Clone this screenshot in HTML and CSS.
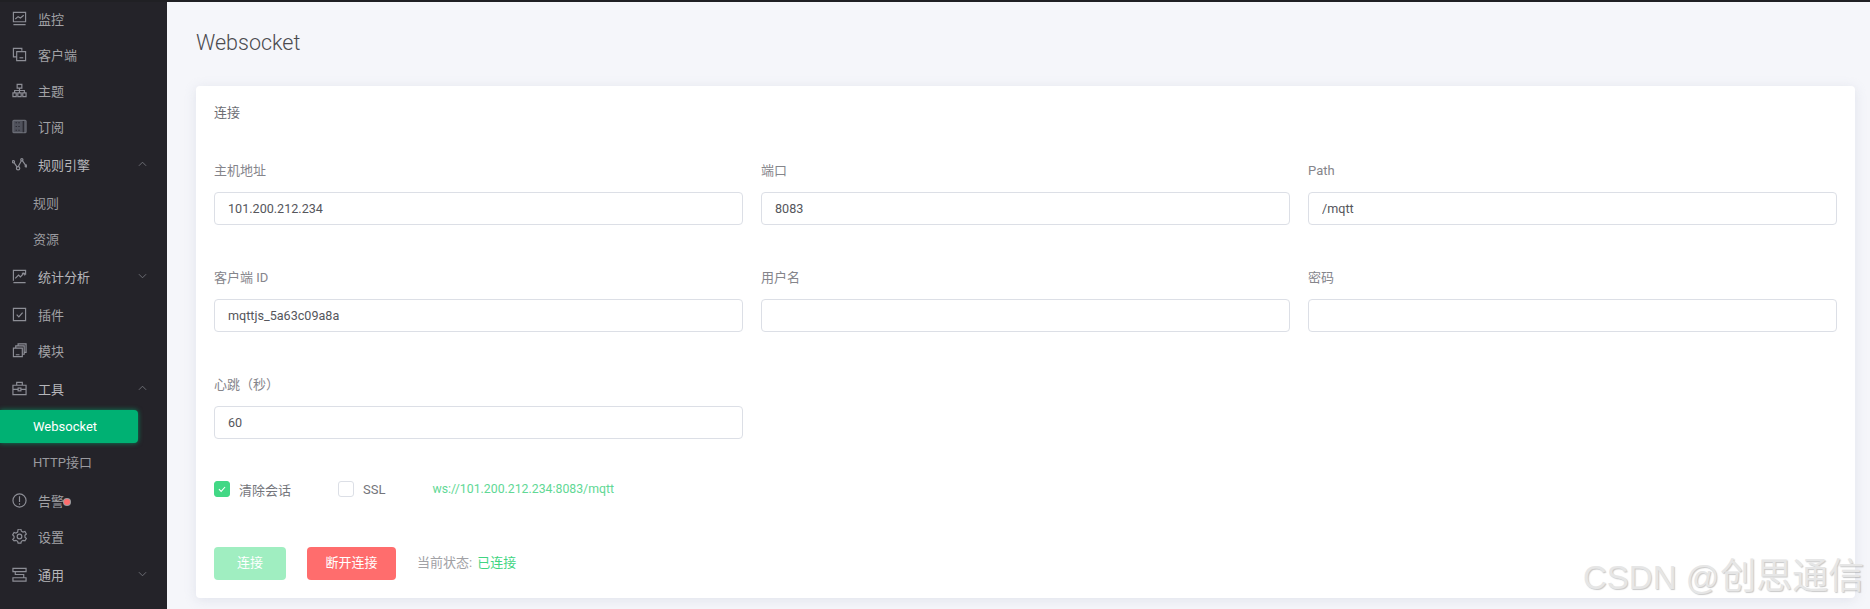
FILE: index.html
```html
<!DOCTYPE html>
<html lang="zh-CN">
<head>
<meta charset="utf-8">
<title>Websocket</title>
<link rel="stylesheet" href="styles.css">
</head>
<body>
<div class="topbar"></div>
<div class="app">
  <aside class="sidebar">
    <nav class="menu">
      <a class="item"><svg class="ic" viewBox="0 0 16 16"><path d="M1.500 1.500h13v10h-13zM1.500 14.500h13"/><path d="M3.500 8.500l3-2.500 2.500 1.500 3.500-3"/></svg><span>监控</span></a>
      <a class="item"><svg class="ic" viewBox="0 0 16 16"><path d="M10.500 4V1.500h-9v9H5M5 5h9.500v9.500H5z"/><path d="M8 11.500h4"/></svg><span>客户端</span></a>
      <a class="item"><svg class="ic" viewBox="0 0 16 16"><path d="M5.500 1.500h5v4h-5zM1 10.500h3.500v4H1zM6.200 10.500h3.600v4H6.200zM11.500 10.500H15v4h-3.500zM2.800 10.500V8h10.400v2.500M8 5.500v5"/></svg><span>主题</span></a>
      <a class="item"><svg class="ic" viewBox="0 0 16 16"><rect class="fill" x="1" y="1.500" width="14" height="13" rx="1"/><path class="cut" d="M4.500 3.500v1M4.500 7.500v1M4.500 11.500v1M7.500 3.500v1M7.500 7.500v1M7.500 11.500v1M12 2v12"/></svg><span>订阅</span></a>
      <a class="item head"><svg class="ic" viewBox="0 0 16 16"><path d="M1.500 5L6 11.500 10.500 3l4.500 6.500"/><circle class="solid" cx="1.500" cy="5" r="1.200"/><circle class="solid" cx="6.500" cy="12" r="1.800"/><circle class="solid" cx="10.500" cy="3" r="1.200"/><circle class="solid" cx="15" cy="9.500" r="1"/></svg><span>规则引擎</span><svg class="chev" viewBox="0 0 10 6"><path d="M1 5l4-4 4 4"/></svg></a>
      <a class="sub">规则</a>
      <a class="sub">资源</a>
      <a class="item head"><svg class="ic" viewBox="0 0 16 16"><path d="M14.500 6V1.500H1.500v11"/><path d="M1.500 14.500h13M3.500 10l3.500-3.500 2 2 4-4.500M10.500 4.500h3v2.500"/></svg><span>统计分析</span><svg class="chev" viewBox="0 0 10 6"><path d="M1 1l4 4 4-4"/></svg></a>
      <a class="item"><svg class="ic" viewBox="0 0 16 16"><path d="M1.500 1.500h13v13h-13z"/><path d="M5 8.200l2.300 2.300L11.300 6"/></svg><span>插件</span></a>
      <a class="item"><svg class="ic" viewBox="0 0 16 16"><path d="M1.500 5.500H11v9H1.500zM4 5V3h9v9h-2M6.500 3V1H15v9h-2M4 12.500h4"/></svg><span>模块</span></a>
      <a class="item head"><svg class="ic" viewBox="0 0 16 16"><path d="M1 4.500h14v10H1zM5 4.500v-3h6v3M1 9h14"/><rect class="solid" x="6.500" y="7.500" width="3" height="3"/></svg><span>工具</span><svg class="chev" viewBox="0 0 10 6"><path d="M1 5l4-4 4 4"/></svg></a>
      <a class="sub active">Websocket</a>
      <a class="sub">HTTP接口</a>
      <a class="item alarm"><svg class="ic" viewBox="0 0 16 16"><circle cx="8" cy="8" r="7"/><path d="M8 3.500v6M8 11v1.500"/></svg><span>告警</span><i class="dot"></i></a>
      <a class="item"><svg class="ic" viewBox="0 0 16 16"><path d="M6.500 1h3l.5 2 1.800 1 2-.6 1.500 2.600-1.500 1.400v2l1.500 1.400-1.500 2.600-2-.6-1.800 1-.5 2h-3l-.5-2-1.800-1-2 .6L.7 11.800l1.500-1.400v-2L.7 7l1.500-2.600 2 .6L6 4z" transform="translate(0 -.700)"/><circle cx="8" cy="8" r="2.500"/></svg><span>设置</span></a>
      <a class="item head"><svg class="ic" viewBox="0 0 16 16"><path d="M1 1.500h14V5H1zM1 11.500h14V15H1zM3.500 5v3h9v3.500"/></svg><span>通用</span><svg class="chev" viewBox="0 0 10 6"><path d="M1 1l4 4 4-4"/></svg></a>
    </nav>
  </aside>
  <main class="main">
    <h1 class="title">Websocket</h1>
    <section class="card">
      <h2 class="card-title">连接</h2>
      <div class="grid">
        <label class="field"><span class="lab">主机地址</span><input class="inp" value="101.200.212.234"></label>
        <label class="field"><span class="lab">端口</span><input class="inp" value="8083"></label>
        <label class="field"><span class="lab">Path</span><input class="inp" value="/mqtt"></label>
        <label class="field"><span class="lab">客户端 ID</span><input class="inp" value="mqttjs_5a63c09a8a"></label>
        <label class="field"><span class="lab">用户名</span><input class="inp" value=""></label>
        <label class="field"><span class="lab">密码</span><input class="inp" value=""></label>
        <label class="field"><span class="lab">心跳（秒）</span><input class="inp" value="60"></label>
      </div>
      <div class="opts">
        <span class="check on"><svg viewBox="0 0 16 16"><path d="M4.500 8.200l2.500 2.500 4.500-5"/></svg></span><span class="opt-text">清除会话</span>
        <span class="check second"></span><span class="opt-text">SSL</span>
        <span class="url">ws://101.200.212.234:8083/mqtt</span>
      </div>
      <div class="actions">
        <button class="btn conn">连接</button>
        <button class="btn disc">断开连接</button>
        <span class="status">当前状态:</span><span class="state">已连接</span>
      </div>
    </section>
  </main>
</div>
<div class="wm">CSDN @<span class="wm-cjk">创思通信</span></div>
</body>
</html>
```
FILE: styles.css
```css
* { box-sizing: border-box; }
html, body { margin: 0; height: 609px; overflow: hidden; }
body { font-family: Roboto, "Noto Sans CJK SC", sans-serif; font-size: 13px; background: #f5f6fa; position: relative; }
.topbar { height: 2px; background: #202024; position: relative; z-index: 1; }
.app { display: flex; height: 607px; }
.sidebar { width: 167px; flex: none; background: #242329; }
.menu { display: flex; flex-direction: column; margin-top: -2px; }
.item, .sub { display: flex; align-items: center; color: #a2a2a6; height: 36px; white-space: nowrap; }
.item { padding-left: 12px; }
.item span { margin-left: 11px; }
.head { height: 40px; color: #b6b6ba; }
.sub { padding-left: 33px; color: #9a9a9f; margin-right: 29px; }
.ic { width: 15px; height: 15px; flex: none; fill: none; stroke: #8d8e96; stroke-width: 1.250; }
.ic .fill { fill: #50525c; stroke: #6a6c75; }
.ic .cut { stroke: #23232a; stroke-width: 1.200; }
.ic .solid { fill: #242329; }
.chev { width: 9px; height: 6px; margin-left: auto; margin-right: 20px; fill: none; stroke: #74757c; stroke-width: 1; }
.active { background: #00b173; color: #fff; height: 33px; margin-top: 2px; margin-bottom: 0; border-radius: 0 4px 4px 0; box-shadow: 0 0 5px rgba(0, 177, 115, .7); }
.alarm { margin-top: 3px; }
.dot { width: 6px; height: 6px; border-radius: 50%; background: #ff6d6d; box-shadow: 0 0 0 1px rgba(255,255,255,.55); align-self: center; margin-top: 3px; }
.main { flex: 1; min-width: 0; padding: 0 15px 0 29px; }
.title { font-weight: 300; font-size: 21.500px; line-height: 26px; color: #4b4b4f; margin: 28px 0 0; height: 56px; }
.card { background: #fff; border-radius: 4px; height: 512px; padding: 18px; box-shadow: 0 2px 12px rgba(200, 205, 220, .45); }
.card-title { font-weight: 400; font-size: 13px; line-height: 18px; color: #6c6d73; margin: 0; height: 58px; }
.grid { display: grid; grid-template-columns: repeat(3, 1fr); column-gap: 18px; row-gap: 44px; }
.field { display: flex; flex-direction: column; }
.lab { color: #85858b; line-height: 18px; height: 18px; margin-bottom: 12px; }
.inp { height: 33px; border: 1px solid #dcdfe6; border-radius: 4px; padding: 0 13px 1px; font: 12.600px Roboto, sans-serif; color: #55565c; background: #fff; outline: none; width: 100%; }
.opts { display: flex; align-items: center; margin-top: 41px; height: 18px; }
.check { width: 16px; height: 16px; border: 1px solid #dcdfe6; border-radius: 3px; flex: none; background: #fff; }
.check.on { background: #42d885; border-color: #42d885; display: flex; }
.check svg { width: 100%; height: 100%; fill: none; stroke: #fff; stroke-width: 1.200; }
.second { margin-left: 47px; }
.opt-text { color: #74757b; margin-left: 9px; }
.url { color: #61d895; margin-left: 47px; font-size: 12.300px; }
.actions { display: flex; align-items: center; margin-top: 49px; }
.btn { height: 33px; border: 0; border-radius: 4px; color: #fff; font: 13px Roboto, "Noto Sans CJK SC", sans-serif; padding: 0 0 4px; }
.conn { width: 72px; background: #a0eec1; }
.disc { width: 89px; background: #ff6d6d; margin-left: 21px; }
.status { color: #a1a1a5; margin: 0 0 4px 21px; }
.state { color: #3fd582; margin: 0 0 4px 5px; }
.wm { position: absolute; left: 1583px; top: 557px; font-family: "Liberation Sans", "Noto Sans CJK SC", sans-serif; font-size: 33px; line-height: 40px; color: #e6e6e6; white-space: nowrap; text-shadow: 1px 1px 1px rgba(120,120,120,.4); }
.wm-cjk { font-size: 36px; margin-left: 1px; }
```
